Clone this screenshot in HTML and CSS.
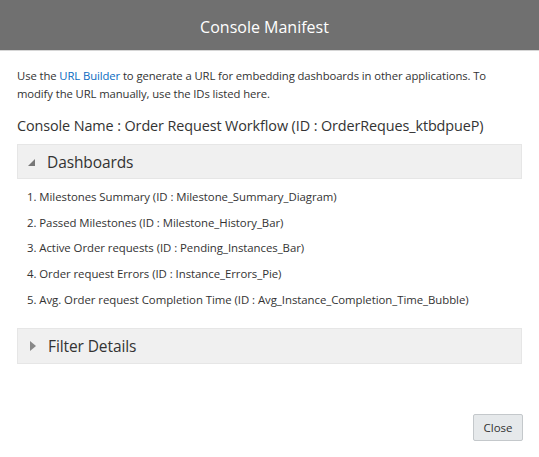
FILE: index.html
```html
<!DOCTYPE html>
<html>
<head>
<meta charset="utf-8">
<link rel="stylesheet" href="styles.css">
</head>
<body>
<div class="dialog">
  <div class="header">Console Manifest</div>
  <div class="content">
    <p class="intro">Use the <span class="link">URL Builder</span> to generate a URL for embedding dashboards in other applications. To modify the URL manually, use the IDs listed here.</p>
    <div class="console-name">Console Name : Order Request Workflow (ID : OrderReques_ktbdpueP)</div>
    <div class="panel">
      <span class="tri tri-open"></span><span class="panel-title">Dashboards</span>
    </div>
    <ol class="list">
      <li>1. Milestones Summary (ID : Milestone_Summary_Diagram)</li>
      <li>2. Passed Milestones (ID : Milestone_History_Bar)</li>
      <li>3. Active Order requests (ID : Pending_Instances_Bar)</li>
      <li>4. Order request Errors (ID : Instance_Errors_Pie)</li>
      <li>5. Avg. Order request Completion Time (ID : Avg_Instance_Completion_Time_Bubble)</li>
    </ol>
    <div class="panel panel-filter">
      <span class="tri tri-closed"></span><span class="panel-title">Filter Details</span>
    </div>
  </div>
  <div class="footer">
    <button class="btn">Close</button>
  </div>
</div>
</body>
</html>
```
FILE: styles.css
```css
* { box-sizing: border-box; }
html, body { margin: 0; padding: 0; background: #fff; }
body {
  font-family: "Open Sans", "Noto Sans", sans-serif;
  color: #333;
  width: 539px;
  height: 457px;
  overflow: hidden;
}
.dialog { display: flex; flex-direction: column; height: 457px; }
.header {
  height: 51px;
  background: #707070;
  border-bottom: 1px solid #d6d6d6;
  color: #fff;
  font-size: 16px;
  display: flex;
  align-items: center;
  justify-content: center;
  padding: 3px 10px 0 0;
}
.content { padding: 0 17px; }
.intro {
  margin: 16px 0 0;
  max-width: 480px;
  font-size: 11.3px;
  line-height: 18px;
  color: #333;
  letter-spacing: -0.1px;
}
.link { color: #0a6bbf; }
.console-name {
  margin-top: 13px;
  font-size: 14.4px;
  line-height: 20px;
  color: #333;
  letter-spacing: -0.1px;
}
.panel {
  margin-top: 8px;
  height: 35px;
  background: #f0f0f0;
  border: 1px solid #e6e6e6;
  display: flex;
  align-items: center;
  padding-left: 10px;
}
.panel-filter { height: 36px; }
.panel-title { font-size: 15.5px; color: #333; letter-spacing: -0.1px; }
.tri { display: inline-block; width: 0; height: 0; margin-right: 12px; }
.tri-open {
  border-left: 7px solid transparent;
  border-bottom: 7px solid #777;
  margin-top: 2px;
}
.tri-closed {
  border-top: 5px solid transparent;
  border-bottom: 5px solid transparent;
  border-left: 6px solid #888;
  margin-left: 2px;
}
.list {
  list-style: none;
  margin: 10px 0 0;
  padding: 0 0 0 10px;
  font-size: 11.4px;
  letter-spacing: -0.05px;
}
.list li { height: 25.7px; line-height: 16px; }
.list + .panel { margin-top: 11px; }
.footer {
  display: flex;
  justify-content: flex-end;
  padding: 0 16px;
  margin-top: 50px;
}
.btn {
  width: 50px;
  height: 27px;
  background: #e6e9eb;
  border: 1px solid #c4c8cb;
  border-radius: 2px;
  font-family: "Open Sans", sans-serif;
  font-size: 11.5px;
  color: #333;
  padding: 0;
}
```
